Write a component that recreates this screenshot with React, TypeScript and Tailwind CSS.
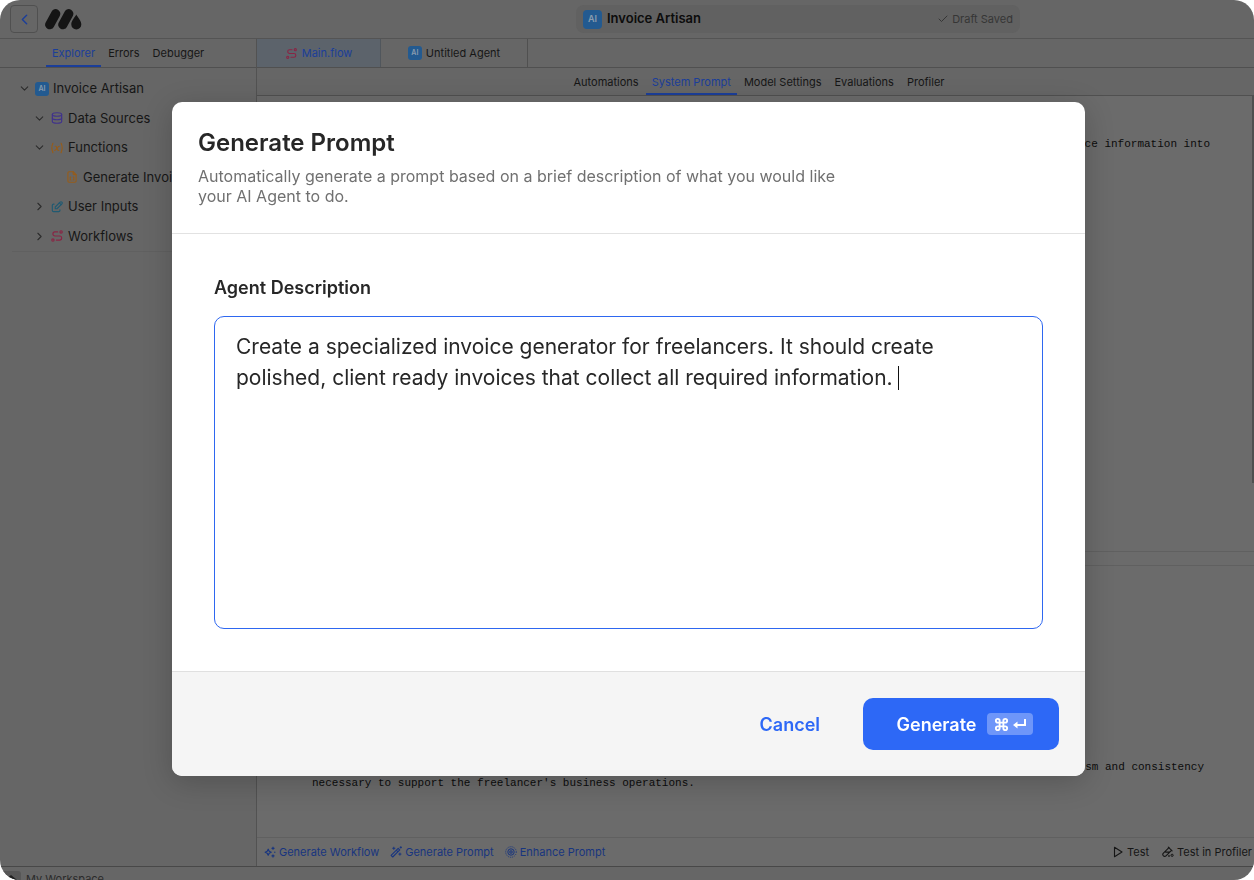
import { useState } from "react";
import { TbDatabase, TbEdit, TbFileCode2, TbRoute, TbVariable } from "react-icons/tb";
import { Check, ChevronDown, ChevronLeft, ChevronRight } from "lucide-react";

const UI_FONT = "font-['Inter','Liberation_Sans',sans-serif]";
const MONO_FONT = "font-['Liberation_Mono',monospace]";

function Logo() {
  return (
    <svg viewBox="0 0 37 22" className="h-[22px] w-[37px]" fill="none" aria-label="Home">
      <path d="M4.700 16.700 10.700 5.700M17.800 16.700 23.800 5.700" stroke="#151515" strokeWidth="9.200" strokeLinecap="round" />
      <path d="M31.3 6.600c1.6 3 5 6.500 5 9.900a5 5 0 0 1-10 0c0-3.400 3.400-6.900 5-9.900Z" fill="#151515" />
    </svg>
  );
}

function AiBadge({ large = false }: { large?: boolean }) {
  return (
    <span
      className={
        large
          ? "flex size-[19px] shrink-0 items-center justify-center rounded bg-[#235a90] text-[9px] font-semibold text-[#8a9cae]"
          : "flex size-[14px] shrink-0 items-center justify-center rounded-[3px] bg-[#235a90] text-[7px] font-semibold text-[#8a9cae]"
      }
    >
      AI
    </span>
  );
}

function SparkleIcon() {
  return (
    <svg viewBox="0 0 12 12" className="size-3" fill="none" stroke="currentColor">
      <path d="M4.200 3.200 5.200 5.200 7.200 6.200 5.200 7.200 4.200 9.200 3.200 7.200 1.200 6.200 3.200 5.200Z" strokeWidth="1.200" strokeLinejoin="round" />
      <path d="M9 .8v3M7.500 2.300h3M9 8.400v3M7.500 9.900h3" strokeWidth="1.200" />
      <circle cx="10.800" cy="6.200" r=".7" fill="currentColor" stroke="none" />
    </svg>
  );
}

function WandIcon() {
  return (
    <svg viewBox="0 0 12 12" className="size-3" fill="none" stroke="currentColor">
      <path d="M8.200 2.300 9.800 3.900 2.700 11 1.100 9.400ZM6.300 4.200 7.900 5.800" strokeWidth="1.100" strokeLinejoin="round" />
      <path d="M3.800.8v3M2.300 2.300h3M9.900 6.600v3M8.400 8.100h3M10.800.3v2.200M9.700 1.400h2.200" strokeWidth="1" />
    </svg>
  );
}

function TargetIcon() {
  return (
    <svg viewBox="0 0 12 12" className="size-3" fill="none" stroke="currentColor">
      <circle cx="6" cy="6" r="1.200" strokeWidth="1.100" />
      <circle cx="6" cy="6" r="3.200" strokeWidth="1" />
      <circle cx="6" cy="6" r="5.300" strokeWidth="1" strokeDasharray="1 1.080" />
    </svg>
  );
}

function PlayIcon() {
  return (
    <svg viewBox="0 0 12 12" className="size-3" fill="none" stroke="currentColor">
      <path d="M2.500 1.300 10 6 2.500 10.700Z" strokeWidth="1.100" strokeLinejoin="round" />
    </svg>
  );
}

function ProfilerIcon() {
  return (
    <svg viewBox="0 0 12 12" className="size-3" fill="none" stroke="currentColor" strokeLinejoin="round">
      <path d="M6.900 1.700 1.400 7.200A1.800 1.800 0 0 0 4 9.800L9.500 4.300M3.600 6.100H7.600" strokeWidth="1.100" strokeLinecap="round" />
      <path d="M6.300 1.100 10.100 4.900" strokeWidth="1.100" strokeLinecap="round" />
      <circle cx="7" cy="10" r=".6" strokeWidth=".8" />
      <circle cx="10.100" cy="9.300" r="1.100" strokeWidth="1" />
    </svg>
  );
}

const sideTabs = ["Explorer", "Errors", "Debugger"];
const agentTabs = ["Automations", "System Prompt", "Model Settings", "Evaluations", "Profiler"];

function Tab({ label, active }: { label: string; active: boolean }) {
  return (
    <button
      type="button"
      className={
        active
          ? "border-b-2 border-[#1b3e99] px-1.5 pt-0.5 text-[11px] text-[#1b3e99]"
          : "border-b-2 border-transparent px-1.5 pt-0.5 text-[11px] text-[#161616]"
      }
    >
      {label}
    </button>
  );
}

function Sidebar() {
  const row = "flex items-center gap-1 whitespace-nowrap";
  return (
    <aside className="flex w-[257px] shrink-0 flex-col border-r border-[#525252]">
      <nav className="flex h-[29px] shrink-0 gap-px border-b border-[#505050] pl-[46px]">
        {sideTabs.map((t) => (
          <Tab key={t} label={t} active={t === "Explorer"} />
        ))}
      </nav>
      <ul className="mt-1.5 ml-3 grid h-[178px] grid-rows-6 border-b border-[#606060] text-[13px] text-[#161616]">
        <li className={`${row} pl-1.5`}>
          <ChevronDown size={13} className="text-[#2c2c2c]" />
          <AiBadge />
          <span>Invoice Artisan</span>
        </li>
        <li className={`${row} pl-[21px]`}>
          <ChevronDown size={13} className="text-[#2c2c2c]" />
          <TbDatabase size={14} className="text-[#40328c]" />
          <span>Data Sources</span>
        </li>
        <li className={`${row} pl-[21px]`}>
          <ChevronDown size={13} className="text-[#2c2c2c]" />
          <TbVariable size={14} className="text-[#965c1a]" />
          <span>Functions</span>
        </li>
        <li className={`${row} pl-[53px]`}>
          <TbFileCode2 size={14} className="text-[#965c1a]" />
          <span>Generate Invoice</span>
        </li>
        <li className={`${row} pl-[21px]`}>
          <ChevronRight size={13} className="text-[#2c2c2c]" />
          <TbEdit size={14} className="text-[#205a72]" />
          <span>User Inputs</span>
        </li>
        <li className={`${row} pl-[21px]`}>
          <ChevronRight size={13} className="text-[#2c2c2c]" />
          <TbRoute size={14} className="text-[#8a2444]" />
          <span>Workflows</span>
        </li>
      </ul>
    </aside>
  );
}

function Workspace() {
  const code = `${MONO_FONT} text-[11px] leading-4 whitespace-pre text-[#0c0c0c]`;
  return (
    <main className="flex min-w-0 flex-1 flex-col">
      <nav className="flex h-[29px] shrink-0 border-b border-[#505050] text-[11px]">
        <button type="button" className="flex w-[124px] items-center justify-center gap-1 border-r border-[#50565c] bg-[#5c636b] text-[#1b3e99]">
          <TbRoute size={13} className="text-[#8a2444]" />
          Main.flow
        </button>
        <button type="button" className="flex w-[147px] items-center justify-center gap-1 border-r border-[#505050] text-[#161616]">
          <AiBadge />
          Untitled Agent
        </button>
      </nav>
      <nav className="flex h-7 shrink-0 justify-center gap-px border-b border-[#505050] pt-px pl-[7px]">
        {agentTabs.map((t) => (
          <Tab key={t} label={t} active={t === "System Prompt"} />
        ))}
      </nav>
      <section className="relative flex flex-[456] flex-col border-b border-[#606060] bg-[#6b6b6b]">
        <p className={`${code} mt-10 mr-[44px] self-end`}>ce information into</p>
        <span className="absolute top-0 right-0 h-[85%] w-0.5 bg-[#4f4f4f]" />
      </section>
      <div className="h-3.5 shrink-0 border-b border-[#606060] bg-[#6b6b6b]" />
      <section className="flex flex-[272] flex-col justify-end border-b border-[#606060] bg-[#6b6b6b]">
        <p className={`${code} mr-[50px] self-end`}>sm and consistency</p>
        <p className={`${code} mb-[46px] ml-[55px]`}>necessary to support the freelancer's business operations.</p>
      </section>
      <div className="flex h-7 shrink-0 items-center justify-between bg-[#6b6b6b] pr-0.5 pl-[7px] text-[11px]">
        <div className="flex gap-[11px] text-[#18357f]">
          <button type="button" className="flex items-center gap-[3px]"><SparkleIcon />Generate Workflow</button>
          <button type="button" className="flex items-center gap-[3px]"><WandIcon />Generate Prompt</button>
          <button type="button" className="flex items-center gap-[3px]"><TargetIcon />Enhance Prompt</button>
        </div>
        <div className="flex gap-[13px] text-[#161616]">
          <button type="button" className="flex items-center gap-[3px]"><PlayIcon />Test</button>
          <button type="button" className="flex items-center gap-[3px]"><ProfilerIcon />Test in Profiler</button>
        </div>
      </div>
    </main>
  );
}

function GenerateDialog() {
  const [text, setText] = useState(
    "Create a specialized invoice generator for freelancers. It should create polished, client ready invoices that collect all required information. "
  );
  return (
    <div className="fixed inset-0 flex items-center justify-center pb-0.5 pl-[3px]">
      <div
        role="dialog"
        aria-labelledby="dialog-title"
        className="flex w-full max-w-[913px] flex-col overflow-hidden rounded-[10px] bg-white text-[#272727] shadow-[0_6px_30px_rgba(0,0,0,0.2)]"
      >
        <header className="border-b border-[#e2e2e2] px-[26px] pt-[25px] pb-[27px]">
          <h1 id="dialog-title" className="text-[24px] leading-8 font-semibold">Generate Prompt</h1>
          <p className="mt-[7px] max-w-[650px] text-[16px] leading-5 text-[#707070]">
            Automatically generate a prompt based on a brief description of what you would like your AI Agent to do.
          </p>
        </header>
        <div className="px-[42px] pt-10 pb-[42px]">
          <label htmlFor="description" className="block text-[18px] leading-7 font-semibold">
            Agent Description
          </label>
          <div className="relative mt-3.5">
            <textarea
              id="description"
              value={text}
              onChange={(e) => setText(e.target.value)}
              className="block h-[313px] w-full resize-none rounded-[10px] border border-[#2e67f0] bg-white px-[21px] py-3.5 text-[21px] leading-[31px] text-[#272727] outline-none"
            />
            <span className="absolute top-[50px] left-[684px] h-6 w-px bg-[#111]" />
          </div>
        </div>
        <footer className="flex items-center justify-end gap-[43px] border-t border-[#e0e0e0] bg-[#f5f5f5] p-[26px]">
          <button type="button" className="text-[18px] font-semibold text-[#2d68f6]">Cancel</button>
          <button type="button" className="flex h-[52px] w-[196px] items-center justify-center gap-[11px] rounded-[10px] bg-[#2d68f6] pl-2 text-[18px] font-semibold text-white">
            Generate
            <span className="flex h-[22px] w-[46px] items-center justify-center gap-[3px] rounded bg-[#6e96f9]">
              <svg viewBox="0 0 24 24" className="size-[15px]" fill="none" stroke="currentColor" strokeWidth="3">
                <path d="M9 9H6a3 3 0 1 1 3-3v12a3 3 0 1 1-3-3h12a3 3 0 1 1-3 3V6a3 3 0 1 1 3 3Z" />
              </svg>
              <svg viewBox="0 0 15 12" className="h-3 w-[15px]" fill="none" stroke="currentColor" strokeWidth="2">
                <path d="M13 1v6H4" />
                <path d="M5.500 3.500v7L1 7Z" fill="currentColor" stroke="none" />
              </svg>
            </span>
          </button>
        </footer>
      </div>
    </div>
  );
}

export default function App() {
  return (
    <div className={`${UI_FONT} h-screen bg-white`}>
      <div className="flex h-full flex-col overflow-hidden rounded-[20px] bg-[#666]">
        <header className="grid h-[39px] shrink-0 grid-cols-[576fr_444px_234fr] items-center border-b border-[#545454]">
          <div className="flex items-center gap-[7px] pl-2.5">
            <button type="button" aria-label="Back" className="flex size-[28px] items-center justify-center rounded border border-[#505050] text-[#1b3e99]">
              <ChevronLeft size={17} />
            </button>
            <Logo />
          </div>
          <div className="flex h-7 items-center rounded-lg bg-[#616161] px-[7px]">
            <AiBadge large />
            <span className="ml-[5px] flex-1 text-[13px] font-semibold whitespace-nowrap text-[#0c0c0c]">Invoice Artisan</span>
            <span className="flex items-center gap-[3px] text-[11px] whitespace-nowrap text-[#363636]">
              <Check size={12} />
              Draft Saved
            </span>
          </div>
        </header>
        <div className="flex min-h-0 flex-1">
          <Sidebar />
          <Workspace />
        </div>
        <footer className="flex h-3.5 shrink-0 items-start gap-[5px] overflow-hidden border-t border-[#484848] pt-1 text-[11px] leading-4 text-[#2b2b2b]">
          <span className="flex size-[21px] items-start justify-center rounded-[3px] bg-[#575757] pt-1">
            <svg viewBox="0 0 12 8" className="h-2 w-3"><path d="M6 0 12 5 9 8H3L0 5Z" fill="#202020" /></svg>
          </span>
          My Workspace
        </footer>
      </div>
      <GenerateDialog />
    </div>
  );
}
